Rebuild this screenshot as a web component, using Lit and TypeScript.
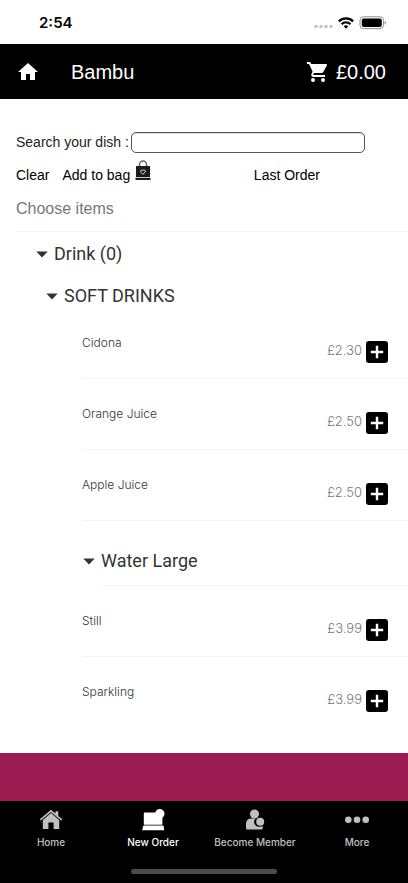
import { LitElement, html, css, svg } from "lit";
import { customElement, property, state } from "lit/decorators.js";
import { classMap } from "lit/directives/class-map.js";

interface Dish {
  name: string;
  price: string;
}

const softDrinks: Dish[] = [
  { name: "Cidona", price: "£2.30" },
  { name: "Orange Juice", price: "£2.50" },
  { name: "Apple Juice", price: "£2.50" },
];

const waterLarge: Dish[] = [
  { name: "Still", price: "£3.99" },
  { name: "Sparkling", price: "£3.99" },
];

const tabs = [
  {
    label: "Home",
    icon: svg`
      <path d="M12 .8.800 10.300l1 1.100L12 2.900l10.200 8.500 1-1.100-3.900-3.300V2.200h-2.800v2.400z"/>
      <path d="M12 4 3.800 10.900V20H9.400v-6.500h5.200V20h5.600v-9.100z"/>`,
  },
  {
    label: "New Order",
    icon: svg`
      <rect x="2.800" y="3.600" width="18.600" height="12.200" rx=".8"/>
      <circle cx="18.800" cy="4.800" r="4.700"/>
      <path d="M2.300 16.400h20.200l.8 4.800H1.200z"/>`,
  },
  {
    label: "Become Member",
    icon: svg`
      <circle cx="11.500" cy="5" r="4.500"/>
      <path d="M3 19v-4q0-5.500 5.500-5.500h4a4.900 4.900 0 0 0 4.500 8.200q1.500 0 2.700-.8v2.300q0 1.300-1.300 1.300H4.300Q3 20.500 3 19z"/>
      <circle cx="17.200" cy="12.700" r="4"/>`,
  },
  {
    label: "More",
    icon: svg`
      <circle cx="3.300" cy="10.700" r="3.300"/>
      <circle cx="12" cy="10.700" r="3.300"/>
      <circle cx="20.700" cy="10.700" r="3.300"/>`,
  },
];

@customElement("status-bar")
class StatusBar extends LitElement {
  static styles = css`
    :host {
      display: flex;
      align-items: center;
      justify-content: space-between;
      height: 44px;
      box-sizing: border-box;
      padding: 1px 22px 0 39px;
      font: 600 15px/20px Inter, sans-serif;
      color: #000;
    }
    .icons {
      display: flex;
      align-items: center;
      gap: 5px;
    }
    svg {
      display: block;
    }
  `;
  render() {
    return html`
      <span>2:54</span>
      <div class="icons">
        <svg width="20" height="14" viewBox="0 0 20 14" fill="#c4c4c4">
          <circle cx="3" cy="10.500" r="1.800" /><circle cx="8" cy="10.500" r="1.800" />
          <circle cx="13" cy="10.500" r="1.800" /><circle cx="18" cy="10.500" r="1.800" />
        </svg>
        <svg width="16" height="12" viewBox="0 0 16 12" fill="none" stroke="#000" stroke-width="2.300">
          <path d="M.9 4.300a10.200 10.200 0 0 1 14.200 0" />
          <path d="M3.600 7.200a6.300 6.300 0 0 1 8.800 0" />
          <path d="M5.800 9.200a3.200 3.200 0 0 1 4.400 0L8 11.800z" fill="#000" stroke="none" />
        </svg>
        <svg width="27" height="14" viewBox="0 0 27 14">
          <rect x="1" y=".8" width="23.500" height="11.800" rx="3.500" fill="none" stroke="#8f8f8f" />
          <rect x="2.800" y="2.500" width="20" height="8.400" rx="2" />
          <path d="M25.600 4.700v4q1.300-.6 1.300-2t-1.300-2z" fill="#8f8f8f" />
        </svg>
      </div>
    `;
  }
}

@customElement("dish-row")
class DishRow extends LitElement {
  @property() name = "";
  @property() price = "";
  @property({ type: Boolean, reflect: true }) last = false;

  static styles = css`
    :host {
      display: flex;
      align-items: center;
      justify-content: space-between;
      height: 71px;
      box-sizing: border-box;
      margin-left: 82px;
      padding-right: 20px;
      border-bottom: 1px solid #f4f4f4;
    }
    :host([last]) {
      border-color: transparent;
    }
    .name {
      font: 300 12px/20px Inter, sans-serif;
      color: #333;
    }
    .buy {
      display: flex;
      align-items: center;
      gap: 4px;
      padding-top: 18px;
    }
    .price {
      font: 300 13px/20px Inter, sans-serif;
      color: #777;
      padding-bottom: 4px;
    }
    button {
      width: 22px;
      height: 22px;
      padding: 0;
      border: 0;
      border-radius: 3px;
      background: #000;
    }
    svg {
      display: block;
    }
  `;
  render() {
    return html`
      <span class="name">${this.name}</span>
      <div class="buy">
        <span class="price">${this.price}</span>
        <button aria-label="Add ${this.name}">
          <svg width="22" height="22" viewBox="0 0 22 22" stroke="#fff" stroke-width="2.400">
            <path d="M11 4.800v12.400M4.800 11h12.400" />
          </svg>
        </button>
      </div>
    `;
  }
}

@customElement("app-root")
class AppRoot extends LitElement {
  @state() active = "New Order";

  static styles = css`
    :host {
      display: flex;
      flex-direction: column;
      min-height: 100vh;
      background: #fff;
      font-family: "Liberation Sans", Arial, sans-serif;
      color: #222;
    }
    svg {
      display: block;
    }
    button {
      font: inherit;
      color: inherit;
      background: none;
      border: 0;
      padding: 0;
      cursor: pointer;
    }
    .topbar {
      display: flex;
      align-items: center;
      height: 55px;
      box-sizing: border-box;
      padding: 0 22px 0 16px;
      background: #000;
      color: #fff;
      font-size: 20px;
      line-height: 24px;
    }
    h1 {
      flex: 1;
      margin: 0 0 0 31px;
      font: inherit;
    }
    .cart {
      display: flex;
      align-items: center;
      gap: 6px;
    }
    main {
      flex: 1;
    }
    .tools {
      padding: 32px 16px 0;
    }
    .search {
      display: flex;
      align-items: flex-end;
      gap: 2px;
      margin-right: 27px;
      font-size: 14px;
      line-height: 22px;
      color: #222;
    }
    .search label {
      line-height: 22px;
    }
    .search input {
      flex: 1;
      min-width: 0;
      height: 21px;
      box-sizing: border-box;
      border: 1px solid #555;
      border-radius: 5px;
      background: #fff;
      box-shadow: inset 0 1px 1px #ddd;
      font: inherit;
    }
    .actions {
      display: flex;
      align-items: center;
      height: 34px;
      margin-top: 5px;
      font-size: 14px;
      line-height: 20px;
      color: #000;
    }
    .bag {
      display: flex;
      align-items: center;
      gap: 5px;
      margin-left: 13px;
    }
    .bag svg {
      margin-bottom: 10px;
    }
    .last {
      margin-left: auto;
      margin-right: 72px;
    }
    h2,
    h3 {
      margin: 0;
      font-weight: 400;
    }
    .choose {
      padding: 7px 0 12px;
      font-size: 16px;
      line-height: 20px;
      color: #777;
    }
    .rule {
      margin: 0 0 0 16px;
      border: 0;
      border-top: 1px solid #f4f4f4;
    }
    .group {
      display: flex;
      align-items: center;
      gap: 6px;
      font: 400 18px/24px Roboto, sans-serif;
      color: #333;
    }
    .category {
      padding: 10px 0 10px 36px;
    }
    .section {
      padding: 8px 0 0 46px;
    }
    .subsection {
      padding: 28px 0 12px 83px;
    }
    .rule.inner {
      margin-left: 101px;
    }
    .banner {
      height: 48px;
      background: #9c1c52;
    }
    nav {
      background: #000;
      padding-top: 8px;
    }
    .tabs {
      display: grid;
      grid-template-columns: repeat(4, 1fr);
    }
    .tab {
      display: flex;
      flex-direction: column;
      align-items: center;
      gap: 4px;
      color: #c0c0c0;
      text-decoration: none;
      white-space: nowrap;
      font: 500 10px/14px Inter, sans-serif;
    }
    .tab.on {
      color: #fff;
    }
    .handle {
      width: 36%;
      height: 5px;
      margin: 20px auto 9px;
      border-radius: 3px;
      background: #4c4c4c;
    }
  `;

  group(label: string, kind: string) {
    return html`
      <h3>
        <button class="group ${kind}" aria-expanded="true">
          <svg width="12" height="7" viewBox="0 0 12 7" fill="#333"><path d="M.3.500h11.400L6 6.500z" /></svg>
          ${label}
        </button>
      </h3>
    `;
  }

  rows(dishes: Dish[], closes = false) {
    return dishes.map(
      (d, i) => html`<dish-row .name=${d.name} .price=${d.price} ?last=${closes && i === dishes.length - 1}></dish-row>`
    );
  }

  render() {
    return html`
      <status-bar></status-bar>
      <header class="topbar">
        <button aria-label="Home">
          <svg width="24" height="24" viewBox="0 0 24 24" fill="#fff"><path d="M10 20v-6h4v6h5v-8h3L12 3 2 12h3v8z" /></svg>
        </button>
        <h1>Bambu</h1>
        <button class="cart">
          <svg width="24" height="24" viewBox="0 0 24 24" fill="#fff">
            <path d="M1 2h3.270l.94 2H20q1.500.1.880 1.480L17.300 11.970Q16.700 13 15.550 13H8.100l-.93 1.750q0 .25.25.25H19v2H7q-2.100-.3-1.750-2.600l1.350-2.810L3 4H1z" />
            <circle cx="7" cy="20" r="2" />
            <circle cx="17" cy="20" r="2" />
          </svg>
          £0.00
        </button>
      </header>
      <main>
        <div class="tools">
          <div class="search">
            <label for="dish">Search your dish :</label>
            <input id="dish" type="text" />
          </div>
          <div class="actions">
            <button>Clear</button>
            <button class="bag">
              Add to bag
              <svg width="16" height="21" viewBox="0 0 16 21">
                <path d="M4.500 9V4.500a3.500 3.500 0 0 1 7 0V9" fill="none" stroke="#666" stroke-width="1.500" />
                <path d="M1 6h14v11H1zM.5 17.700h15V20H.5z" fill="#1c1c1c" />
                <path d="M8 14.200 5.700 12a1.300 1.300 0 0 1 2.300-1.300 1.300 1.300 0 0 1 2.300 1.300z" fill="none" stroke="#ddd" />
              </svg>
            </button>
            <button class="last">Last Order</button>
          </div>
          <h2 class="choose">Choose items</h2>
        </div>
        <hr class="rule" />
        ${this.group("Drink (0)", "category")} ${this.group("SOFT DRINKS", "section")} ${this.rows(softDrinks)}
        ${this.group("Water Large", "subsection")}
        <hr class="rule inner" />
        ${this.rows(waterLarge, true)}
      </main>
      <div class="banner"></div>
      <nav>
        <div class="tabs">
          ${tabs.map(
            (t) => html`
              <a
                href="#"
                class=${classMap({ tab: true, on: t.label === this.active })}
                @click=${() => (this.active = t.label)}
              >
                <svg width="24" height="22" viewBox="0 0 24 22" fill="currentColor">${t.icon}</svg>
                ${t.label}
              </a>
            `
          )}
        </div>
        <div class="handle"></div>
      </nav>
    `;
  }
}
